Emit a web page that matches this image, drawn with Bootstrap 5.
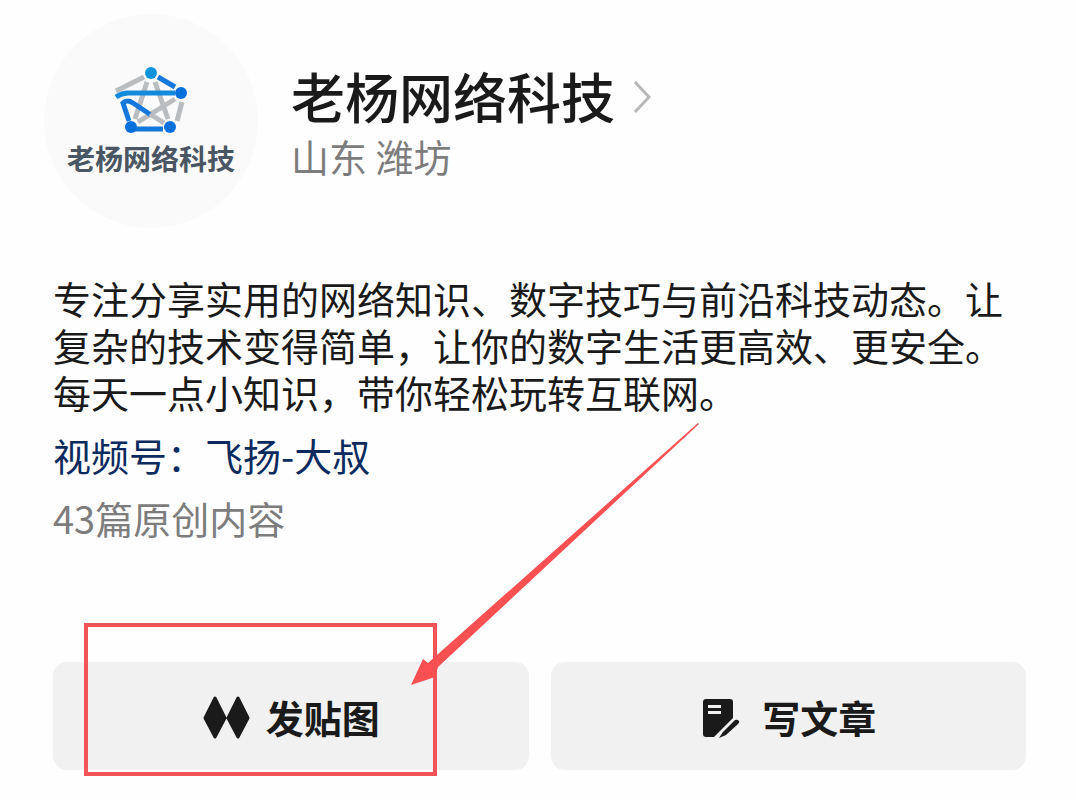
<!DOCTYPE html>
<html lang="zh-CN">
<head>
<meta charset="utf-8">
<meta name="viewport" content="width=device-width, initial-scale=1">
<title>老杨网络科技</title>
<link href="https://cdn.jsdelivr.net/npm/bootstrap@5.3.0/dist/css/bootstrap.min.css" rel="stylesheet">
<style>
body { font-family: "Noto Sans CJK SC", sans-serif; background: #fefefe; color: #1a1a1a; }
.profile { padding: 14px 50px 24px 44px; }
.avatar { width: 214px; height: 214px; background: #fafafa; padding-top: 52px; }
.avatar-name { font-size: 28px; line-height: 36px; font-weight: 700; color: #4a5663; margin-top: 4px; }
.heading { margin-left: 33px; padding-top: 46px; }
.account-name { font-size: 54px; line-height: 72px; font-weight: 500; }
.account-name a { color: inherit; }
.place { font-size: 38px; line-height: 48px; color: #7d7d7d; }
.about { margin-top: 46px; padding-left: 9px; font-size: 38px; line-height: 47px; }
.channel { color: #0b2a5e; margin-top: 16px; }
.count { color: #7d7d7d; margin-top: 16px; }
.actions { margin-top: 121px; padding-left: 9px; gap: 22px; }
.action-btn { height: 108px; border: 0; border-radius: 14px; background: #f1f1f1; color: #1a1a1a; font-size: 38px; font-weight: 700; padding-top: 2px; }
.action-btn:hover { background: #e9e9e9; }
.frame { left: 31px; top: -39px; width: 353px; height: 153px; border: 4px solid #f05458; }
.arrow { left: 357px; top: -240px; }
.frame, .arrow { pointer-events: none; }
</style>
</head>
<body>
<main class="profile">
  <header class="d-flex align-items-start">
    <div class="avatar rounded-circle flex-shrink-0 text-center">
      <svg class="d-block mx-auto" width="76" height="70" viewBox="0 0 76 70" aria-hidden="true">
        <g fill="none" stroke="#b9bdc0" stroke-width="5">
          <path d="M31 11L3 25M34 16L22 53M42 16L55 53M62 33L25 56M69 36L64 55"/>
        </g>
        <path fill="none" stroke="#1578dc" stroke-width="5" d="M45 11L62 21M22 63H50M16 55L10 37Q14 33 20 37L38 49"/>
        <path fill="none" stroke="#b9bdc0" stroke-width="5" d="M37 48L51 57"/>
        <path fill="none" stroke="#fafafa" stroke-width="2" d="M4 36Q9 31 16 31"/>
        <path fill="none" stroke="#128bdc" stroke-width="5" d="M3 31Q9 27 15 27H62"/>
        <circle cx="38" cy="7" r="6" fill="#0e93dc"/>
        <g fill="#0870dc"><circle cx="68" cy="27" r="6"/><circle cx="18" cy="61" r="6"/><circle cx="57" cy="61" r="6"/></g>
      </svg>
      <div class="avatar-name">老杨网络科技</div>
    </div>
    <div class="heading">
      <h1 class="account-name mb-0">
        <a class="d-flex align-items-center text-decoration-none" href="#">老杨网络科技
          <svg class="ms-3" width="24" height="36" viewBox="0 0 24 36" fill="none" stroke="#b8b8b8" stroke-width="3" aria-hidden="true"><path d="M4 4L18 19L4 34"/></svg>
        </a>
      </h1>
      <div class="place">山东 潍坊</div>
    </div>
  </header>
  <section class="about">
    <p class="mb-0">专注分享实用的网络知识、数字技巧与前沿科技动态。让复杂的技术变得简单，让你的数字生活更高效、更安全。每天一点小知识，带你轻松玩转互联网。</p>
    <a class="channel d-block text-decoration-none" href="#">视频号：飞扬-大叔</a>
    <div class="count">43篇原创内容</div>
  </section>
  <div class="actions d-flex">
    <div class="position-relative flex-fill w-50">
      <button type="button" class="action-btn w-100 d-flex align-items-center justify-content-center">
        <svg class="me-3" width="48" height="44" viewBox="0 0 48 44" fill="#1a1a1a" stroke="#1a1a1a" stroke-width="3" stroke-linejoin="round" aria-hidden="true"><path d="M13 3L23 23L13 42L3 23ZM36 3L46 23L36 42L26 23Z"/></svg>
        发贴图
      </button>
      <div class="frame position-absolute"></div>
      <svg class="arrow position-absolute" width="292" height="266" viewBox="0 0 292 266" aria-hidden="true"><path fill="#fa5052" d="M288 1L289 2L28 245L25 255L1 263L13 237L18 241Z"/></svg>
    </div>
    <div class="flex-fill w-50">
      <button type="button" class="action-btn w-100 d-flex align-items-center justify-content-center">
        <svg class="me-4" width="38" height="40" viewBox="-2 -1 38 40" overflow="visible" aria-hidden="true"><path fill="#1a1a1a" d="M4 1H28Q31 1 31 4V20L12 39H4Q1 39 1 36V4Q1 1 4 1Z"/><path stroke="#f1f1f1" stroke-width="3" d="M6 8.500H19M6 14.500H19"/><path fill="#1a1a1a" d="M33 22Q35 21 37 23Q38 24 36 26L24 37L17 40L21 34Z"/></svg>
        写文章
      </button>
    </div>
  </div>
</main>
<script src="https://cdn.jsdelivr.net/npm/bootstrap@5.3.0/dist/js/bootstrap.bundle.min.js"></script>
</body>
</html>
